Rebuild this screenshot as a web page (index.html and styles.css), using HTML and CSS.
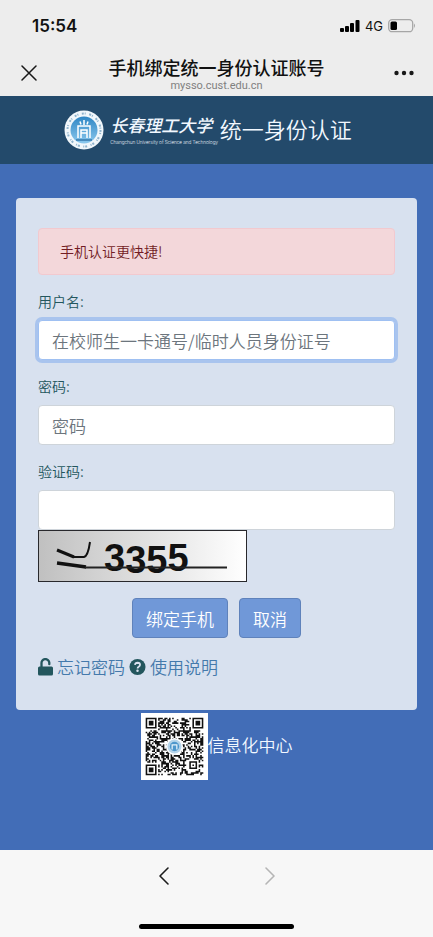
FILE: index.html
```html
<!DOCTYPE html>
<html lang="zh-CN">
<head>
    <meta charset="UTF-8">
    <meta name="viewport" content="width=device-width, initial-scale=1.0">
    <title>手机绑定统一身份认证账号</title>
    <link rel="stylesheet" href="styles.css">
</head>
<body>

    <div class="top-bar">
        <div class="status">
            <span class="time">15:54</span>
            <div class="status-right">
                <svg width="20" height="13" viewBox="0 0 20 13">
                    <rect x="0" y="8" width="4" height="4" rx="1"/>
                    <rect x="5" y="6" width="4" height="6" rx="1"/>
                    <rect x="10" y="3" width="4" height="9" rx="1"/>
                    <rect x="15.500" y="0" width="4" height="12" rx="1"/>
                </svg>
                <span class="network">4G</span>
                <svg width="28" height="14" viewBox="0 0 28 14">
                    <rect x="0.700" y="0.700" width="24" height="12" rx="3.500" fill="none" stroke="#a6a6a6" stroke-width="1.300"/>
                    <rect x="2.500" y="2.500" width="6.500" height="8.500" rx="1.500"/>
                    <path d="M26 4.500q2 2 0 4.500z" fill="#a6a6a6"/>
                </svg>
            </div>
        </div>
        <div class="title-bar">
            <button type="button" class="icon-button" aria-label="关闭">
                <svg width="16" height="16" viewBox="0 0 16 16" fill="none" stroke="#181818" stroke-width="1.500" stroke-linecap="round">
                    <path d="M1 1l14 14M15 1L1 15"/>
                </svg>
            </button>
            <div class="page-title">
                <h1>手机绑定统一身份认证账号</h1>
                <p>mysso.cust.edu.cn</p>
            </div>
            <button type="button" class="icon-button" aria-label="更多">
                <svg width="20" height="6" viewBox="0 0 20 6" fill="#181818">
                    <circle cx="2.500" cy="3" r="2.200"/>
                    <circle cx="10" cy="3" r="2.200"/>
                    <circle cx="17.500" cy="3" r="2.200"/>
                </svg>
            </button>
        </div>
    </div>

    <header class="header">
        <svg class="seal" width="40" height="40" viewBox="0 0 40 40">
            <defs>
                <linearGradient id="sealFill" x1="0" y1="0" x2="0" y2="1">
                    <stop offset="0" stop-color="#2f86c4"/>
                    <stop offset="1" stop-color="#8cc9ee"/>
                </linearGradient>
            </defs>
            <circle cx="20" cy="20" r="19.500" fill="#f1f7fb"/>
            <circle cx="20" cy="20" r="16.500" fill="none" stroke="#8fb3cd" stroke-width="2" stroke-dasharray="2 1 1 3.500"/>
            <circle cx="20" cy="20" r="13.500" fill="url(#sealFill)"/>
            <g fill="none" stroke="#fff" stroke-width="1.500">
                <path d="M20 10v5M16 11.500l1 3M24 11.500l-1 3M14 28V16h12v12M17 28v-8h6v8M17 23h6"/>
                <path d="M12 30h16" stroke="#3478ad"/>
            </g>
        </svg>
        <div class="school">
            <div class="school-name">长春理工大学</div>
            <div class="school-en">Changchun University of Science and Technology</div>
        </div>
        <h2>统一身份认证</h2>
    </header>

    <main>
        <form class="card">
            <div class="alert">手机认证更快捷!</div>

            <div class="form-group">
                <label for="username">用户名:</label>
                <input type="text" id="username" class="form-control active" placeholder="在校师生一卡通号/临时人员身份证号">
            </div>
            <div class="form-group">
                <label for="password">密码:</label>
                <input type="password" id="password" class="form-control" placeholder="密码">
            </div>
            <div class="form-group">
                <label for="captcha">验证码:</label>
                <input type="text" id="captcha" class="form-control">
                <svg class="captcha" width="209" height="52" viewBox="0 0 209 52">
                    <defs>
                        <linearGradient id="captchaFill">
                            <stop offset="0" stop-color="#c0c0c0"/>
                            <stop offset="1" stop-color="#fff"/>
                        </linearGradient>
                    </defs>
                    <rect x="0.500" y="0.500" width="208" height="51" fill="url(#captchaFill)" stroke="#28282c"/>
                    <text class="captcha-text" x="66" y="41 43 43 41">3355</text>
                    <path d="M19 20l17 7" stroke="#111" stroke-width="3"/>
                    <path d="M35 27h11q4-1 6-15" fill="none" stroke="#111" stroke-width="2"/>
                    <path d="M19 33l29 4" stroke="#111" stroke-width="3.500"/>
                    <path d="M47 37.500h142" stroke="#222" stroke-width="2"/>
                </svg>
            </div>

            <div class="buttons">
                <button type="submit" class="btn">绑定手机</button>
                <button type="button" class="btn">取消</button>
            </div>

            <div class="links">
                <svg width="15" height="18" viewBox="0 0 15 18">
                    <path d="M3.500 9V5.300a3.900 3.900 0 0 1 7.800-.6v1.500" fill="none" stroke="#23565d" stroke-width="2.300" stroke-linecap="round"/>
                    <rect x="0" y="8.500" width="15" height="9" rx="1.500" fill="#23565d"/>
                </svg>
                <a href="#">忘记密码</a>
                <svg width="17" height="18" viewBox="0 0 18 18">
                    <circle cx="9" cy="9" r="8.500" fill="#23565d"/>
                    <path d="M6.300 6.800q.3-2.300 2.800-2.300 2.600.1 2.600 2.200 0 1.200-1.400 2-1.200.7-1.200 1.800" fill="none" stroke="#d8e1ef" stroke-width="1.900"/>
                    <circle cx="9" cy="13" r="1.300" fill="#d8e1ef"/>
                </svg>
                <a href="#">使用说明</a>
            </div>
        </form>

        <div class="info">
            <svg class="qr" width="67" height="67" viewBox="-3 -3 43 43">
                <rect x="-3" y="-3" width="43" height="43" fill="#fff"/>
                <path id="qrModules" fill="#111"/>
                <circle cx="18.500" cy="18.500" r="5.500" fill="#fff"/>
                <circle cx="18.500" cy="18.500" r="4.500" fill="#b5d4ea"/>
                <circle cx="18.500" cy="18.500" r="3" fill="#4e97cc"/>
                <path d="M17 20.500v-3h3v3" fill="none" stroke="#e8f3fa" stroke-width="0.800"/>
            </svg>
            <span>信息化中心</span>
        </div>
    </main>

    <footer class="bottom-bar">
        <nav>
            <button type="button" class="icon-button" aria-label="后退">
                <svg width="12" height="20" viewBox="0 0 12 20" fill="none" stroke="#1c1c1c" stroke-width="1.600" stroke-linecap="round" stroke-linejoin="round">
                    <path d="M10 2L2 10l8 8"/>
                </svg>
            </button>
            <button type="button" class="icon-button" aria-label="前进" disabled>
                <svg width="12" height="20" viewBox="0 0 12 20" fill="none" stroke="#b5b5b5" stroke-width="1.600" stroke-linecap="round" stroke-linejoin="round">
                    <path d="M2 2l8 8-8 8"/>
                </svg>
            </button>
        </nav>
        <div class="home-indicator"></div>
    </footer>

    <script src="qr.js"></script>
</body>
</html>
```
FILE: styles.css
```css
* {
    box-sizing: border-box;
}

body {
    margin: 0;
    min-height: 100vh;
    display: flex;
    flex-direction: column;
    background-color: #426db7;
    font-family: "Noto Sans CJK SC", sans-serif;
    font-weight: 350;
}

h1, h2, p {
    margin: 0;
}

svg {
    display: block;
    flex-shrink: 0;
}

button {
    font-family: inherit;
    font-weight: inherit;
    cursor: pointer;
}

.icon-button {
    display: flex;
    align-items: center;
    justify-content: center;
    width: 28px;
    height: 28px;
    padding: 0;
    border: none;
    background: none;
}

/* Phone status and title */
.top-bar {
    background-color: #ededed;
    color: #111;
    padding-top: 14px;
}

.status {
    display: flex;
    justify-content: space-between;
    align-items: center;
    height: 24px;
    padding: 0 17px 0 32px;
    font-family: Inter, sans-serif;
}

.time {
    font-size: 17px;
    font-weight: 600;
}

.status-right {
    display: flex;
    align-items: center;
    gap: 5px;
}

.network {
    font-size: 13px;
    font-weight: 400;
}

.title-bar {
    display: flex;
    justify-content: space-between;
    align-items: center;
    padding: 16px 15px 4px;
}

.page-title {
    text-align: center;
}

.page-title h1 {
    font-size: 18px;
    font-weight: 500;
    line-height: 26px;
}

.page-title p {
    font-family: Roboto, sans-serif;
    font-size: 11px;
    font-weight: 400;
    line-height: 12px;
    color: #808080;
}

/* Header */
.header {
    display: flex;
    justify-content: center;
    align-items: center;
    height: 68px;
    padding-right: 17px;
    background-color: #234a6b;
    color: #f2f8ff;
}

.school {
    margin: 0 2px 0 6px;
    white-space: nowrap;
}

.school-name {
    font-size: 17px;
    font-style: italic;
    font-weight: 500;
    line-height: 24px;
}

.school-en {
    font-family: Roboto, sans-serif;
    font-size: 5px;
    line-height: 10px;
}

.header h2 {
    padding-bottom: 5px;
    font-size: 22px;
    font-weight: inherit;
    line-height: 32px;
}

/* Login form */
main {
    flex: 1;
    padding: 34px 16px 0;
}

.card {
    padding: 30px 22px;
    background-color: #d8e1ef;
    border-radius: 4px;
}

.alert {
    padding: 12px 21px;
    margin-bottom: 16px;
    border: 1px solid #f2c9cf;
    border-radius: 4px;
    background-color: #f3d7da;
    color: #721c24;
    font-size: 14px;
    line-height: 21px;
}

.form-group {
    margin-bottom: 16px;
}

.form-group label {
    display: block;
    margin-bottom: 9px;
    color: #23565d;
    font-size: 14px;
    line-height: 20px;
}

.form-control {
    display: block;
    width: 100%;
    height: 40px;
    padding: 0 13px;
    border: 1px solid #ced4da;
    border-radius: 4px;
    background-color: #fff;
    color: #495057;
    font-family: inherit;
    font-size: 17px;
    font-weight: inherit;
}

.form-control::placeholder {
    color: #6c757d;
}

.form-control.active,
.form-control:focus {
    border-color: #9fc0f2;
    outline: none;
    box-shadow: 0 0 0 3px #a9c4ee;
}

.captcha-text {
    font-family: "Liberation Sans", sans-serif;
    font-size: 38px;
    font-weight: 700;
    fill: #111;
}

.buttons {
    display: flex;
    justify-content: center;
    gap: 11px;
}

.btn {
    height: 40px;
    padding: 0 13px;
    border: 1px solid #5f82bb;
    border-radius: 4px;
    background-color: #7098d8;
    color: #fff;
    font-size: 17px;
}

.links {
    display: flex;
    align-items: center;
    gap: 4px;
    margin-top: 16px;
    font-size: 17px;
    line-height: 26px;
}

.links a {
    color: #4479ab;
    text-decoration: none;
}

.info {
    display: flex;
    justify-content: center;
    align-items: center;
    padding: 3px 0;
    color: #f2f8ff;
    font-size: 17px;
}

.info span {
    padding-bottom: 4px;
}

/* Browser bottom bar */
.bottom-bar {
    padding: 12px 0 8px;
    background-color: #f7f7f7;
}

.bottom-bar nav {
    display: flex;
    justify-content: center;
    gap: 78px;
    margin-bottom: 34px;
}

.home-indicator {
    width: 36%;
    height: 5px;
    margin: 0 auto;
    border-radius: 3px;
    background-color: #000;
}
```
FILE: qr.js
```js
const size = 37;
let seed = 29;

function random() {
    seed = (seed * 1103515245 + 12345) % 2147483648;
    return seed / 2147483648;
}

// Square rings: 7x7 finders in three corners, one 5x5 alignment mark
function ring(x, y, cx, cy, radius) {
    const d = Math.max(Math.abs(x - cx), Math.abs(y - cy));
    if (d > radius + 1) return null;
    return d === radius || d <= radius - 2;
}

let d = '';
for (let y = 0; y < size; y++) {
    for (let x = 0; x < size; x++) {
        let dark = random() > 0.5;
        const marks = [
            ring(x, y, 3, 3, 3),
            ring(x, y, size - 4, 3, 3),
            ring(x, y, 3, size - 4, 3),
            ring(x, y, size - 7, size - 7, 2)
        ];
        marks.forEach(mark => {
            if (mark !== null) dark = mark;
        });
        if (dark) d += `M${x} ${y}h1v1h-1z`;
    }
}
document.getElementById('qrModules').setAttribute('d', d);
```
